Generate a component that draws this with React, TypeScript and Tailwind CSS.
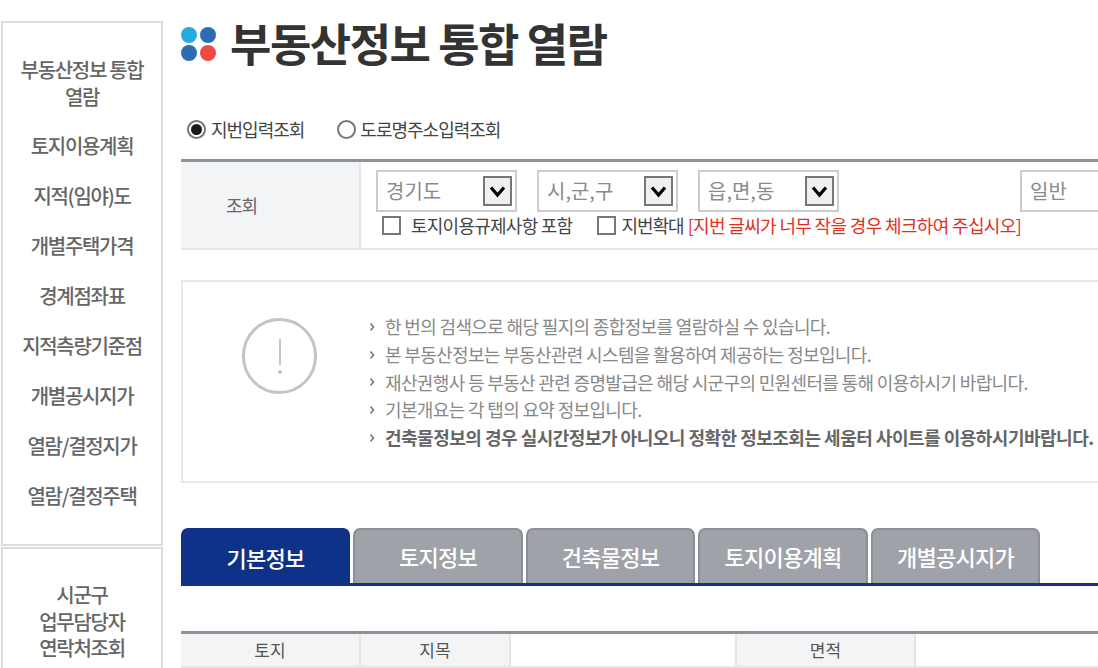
const sideMenu = [
  '부동산정보 통합 열람',
  '토지이용계획',
  '지적(임야)도',
  '개별주택가격',
  '경계점좌표',
  '지적측량기준점',
  '개별공시지가',
  '열람/결정지가',
  '열람/결정주택',
];

const notices = [
  '한 번의 검색으로 해당 필지의 종합정보를 열람하실 수 있습니다.',
  '본 부동산정보는 부동산관련 시스템을 활용하여 제공하는 정보입니다.',
  '재산권행사 등 부동산 관련 증명발급은 해당 시군구의 민원센터를 통해 이용하시기 바랍니다.',
  '기본개요는 각 탭의 요약 정보입니다.',
];

const tabs = [
  { label: '토지정보', width: 'w-[170px]' },
  { label: '건축물정보', width: 'w-[169px]' },
  { label: '토지이용계획', width: 'w-[170px]' },
  { label: '개별공시지가', width: 'w-[169px]' },
];

function Chevron() {
  return (
    <svg width="16" height="10" viewBox="0 0 16 10" className="shrink-0">
      <path d="M1.5 1.5 L4.5 5 L1.5 8.5" fill="none" stroke="#808080" strokeWidth="1.8" />
    </svg>
  );
}

function FakeSelect({ label, width }: { label: string; width: string }) {
  return (
    <div className={`flex h-[42px] items-center justify-between border-2 border-[#cccccc] pl-[8px] pr-[3px] ${width}`}>
      <span className="text-[20px] text-[#8a8a8a]">{label}</span>
      <span className="flex h-[30px] w-[29px] items-center justify-center border-2 border-[#767676] bg-[#f0f0f0]">
        <svg width="17" height="13" viewBox="0 0 17 13">
          <path d="M2 2.5 L8.5 10 L15 2.5" fill="none" stroke="#000" strokeWidth="3.2" />
        </svg>
      </span>
    </div>
  );
}

export default function App() {
  return (
    <div
      className="flex h-[668px] w-[1098px] gap-[18px] overflow-hidden bg-white pl-[1px] pt-[21px]"
      style={{ fontFamily: '"Noto Sans CJK KR", sans-serif' }}
    >
      <aside className="flex w-[162px] shrink-0 flex-col gap-px">
        <nav className="flex h-[525px] shrink-0 flex-col border-2 border-[#dddddd] pt-[33px]">
          {sideMenu.map((item, i) => (
            <div
              key={item}
              className={`flex items-center justify-center px-[14px] text-center text-[20px] font-medium leading-[27px] tracking-[-1.3px] text-[#666666] ${
                i === 0 ? 'mb-[22px] h-[54px]' : 'mb-[23px] h-[27px]'
              }`}
            >
              {item}
            </div>
          ))}
        </nav>
        <div className="h-[160px] shrink-0 border-2 border-[#dddddd] pt-[33px] text-center text-[20px] font-medium leading-[26.5px] tracking-[-1.3px] text-[#666666]">
          시군구
          <br />
          업무담당자
          <br />
          연락처조회
        </div>
      </aside>

      <main className="w-[1000px] shrink-0">
        <div className="-mt-[21px] flex h-[87px] items-center pb-[2px]">
          <div className="mt-[2px] grid w-[35px] shrink-0 grid-cols-2 gap-[2px]">
            <span className="h-[16px] w-[16px] rounded-full bg-[#25aae1]" />
            <span className="h-[16px] w-[16px] rounded-full bg-[#2b6cb5]" />
            <span className="h-[16px] w-[16px] rounded-full bg-[#2b6cb5]" />
            <span className="h-[16px] w-[16px] rounded-full bg-[#ef4a43]" />
          </div>
          <h1 className="ml-[14px] text-[45px] font-bold leading-none tracking-[-1.5px] text-[#333333]">
            부동산정보 통합 열람
          </h1>
        </div>

        <div className="mt-[27px] flex h-[30px] items-center text-[18px] tracking-[-1px] text-[#444444]">
          <span className="ml-[6px] flex h-[19px] w-[19px] items-center justify-center rounded-full border-2 border-[#767676]">
            <span className="h-[11px] w-[11px] rounded-full bg-[#1a1a1a]" />
          </span>
          <span className="ml-[5px]">지번입력조회</span>
          <span className="ml-[33px] h-[19px] w-[19px] rounded-full border-2 border-[#767676]" />
          <span className="ml-[4px]">도로명주소입력조회</span>
        </div>

        <div className="mt-[15px] flex h-[91px] border-t-[3px] border-b-2 border-t-[#8d929c] border-b-[#e6e6e6]">
          <div className="flex w-[180px] items-center border-r-2 border-[#e4e4e4] bg-[#f3f4f6] pl-[45px] text-[18px] tracking-[-1px] text-[#666666]">
            조회
          </div>
          <div className="pl-[15px] pt-[8px]">
            <div className="flex gap-[20px]">
              <FakeSelect label="경기도" width="w-[141px]" />
              <FakeSelect label="시,군,구" width="w-[141px]" />
              <FakeSelect label="읍,면,동" width="w-[141px]" />
              <div className="ml-[161px] flex h-[42px] w-[141px] items-center border-2 border-[#cccccc] pl-[8px] text-[20px] text-[#8a8a8a]">
                일반
              </div>
            </div>
            <div className="mt-[1px] flex h-[25px] items-center pl-[6px] text-[18px] tracking-[-0.75px] text-[#444444]">
              <span className="h-[19px] w-[19px] border-2 border-[#767676]" />
              <span className="ml-[10px]">토지이용규제사항 포함</span>
              <span className="ml-[25px] h-[19px] w-[19px] border-2 border-[#767676]" />
              <span className="ml-[5px] tracking-[-1px]">지번확대</span>
              <span className="ml-[4px] tracking-[-0.65px] text-[#e2301e]">
                [지번 글씨가 너무 작을 경우 체크하여 주십시오]
              </span>
            </div>
          </div>
        </div>

        <section className="mt-[30px] flex h-[203px] border-2 border-[#e8e8e8]">
          <div className="ml-[59px] mt-[36px] flex h-[76px] w-[75px] shrink-0 flex-col items-center justify-center rounded-full border-[3px] border-[#c4c4c4]">
            <span className="h-[26px] w-[2px] bg-[#c4c4c4]" />
            <span className="mt-[5px] h-[4px] w-[4px] rounded-full bg-[#c4c4c4]" />
          </div>
          <ul className="ml-[52px] pt-[31px] text-[18px] leading-[27.75px] tracking-[-0.65px] text-[#888888]">
            {notices.map((text) => (
              <li key={text} className="flex items-center whitespace-nowrap">
                <Chevron />
                {text}
              </li>
            ))}
            <li className="flex items-center whitespace-nowrap font-bold tracking-[-0.5px] text-[#666666]">
              <Chevron />
              건축물정보의 경우 실시간정보가 아니오니 정확한 정보조회는 세움터 사이트를 이용하시기바랍니다.
            </li>
          </ul>
        </section>

        <div className="mt-[45px] flex h-[58px] gap-[3px] border-b-[3px] border-[#0f3289]">
          <div className="-mb-[3px] flex h-[58px] w-[169px] items-center justify-center rounded-t-[7px] bg-[#0f3289] text-[22px] font-medium tracking-[-0.7px] text-white">
            기본정보
          </div>
          {tabs.map((tab) => (
            <div
              key={tab.label}
              className={`flex h-[55px] items-center justify-center rounded-t-[7px] border-l-2 border-r-2 border-t-2 border-[#8b8e94] bg-[#9fa2a8] text-[22px] font-medium tracking-[-0.7px] text-white ${tab.width}`}
            >
              {tab.label}
            </div>
          ))}
        </div>

        <div className="mt-[45px] flex h-[37px] border-t-[3px] border-b-2 border-t-[#8d929c] border-b-[#e6e6e6] text-[17px] text-[#555555]">
          <div className="flex w-[180px] items-center justify-center border-r-2 border-[#e4e4e4] bg-[#f3f4f6]">토지</div>
          <div className="flex w-[150px] items-center justify-center border-r-2 border-[#e4e4e4] bg-[#f3f4f6]">지목</div>
          <div className="w-[224px]" />
          <div className="flex w-[181px] items-center justify-center border-x-2 border-[#e4e4e4] bg-[#f3f4f6]">면적</div>
        </div>
      </main>
    </div>
  );
}
